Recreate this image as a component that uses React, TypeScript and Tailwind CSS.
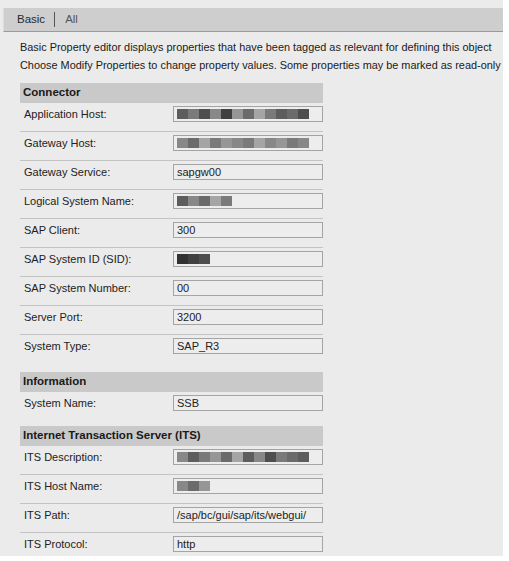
import React from "react";

type Row = { label: string; value?: string; blur?: string[] };

const connector: Row[] = [
  { label: "Application Host:", blur: ["bg-[#444]", "bg-[#666]", "bg-[#333]", "bg-[#777]", "bg-[#222]", "bg-[#888]", "bg-[#555]", "bg-[#999]", "bg-[#666]", "bg-[#444]", "bg-[#555]", "bg-[#333]"] },
  { label: "Gateway Host:", blur: ["bg-[#777]", "bg-[#555]", "bg-[#999]", "bg-[#666]", "bg-[#888]", "bg-[#777]", "bg-[#666]", "bg-[#999]", "bg-[#777]", "bg-[#888]", "bg-[#666]", "bg-[#777]"] },
  { label: "Gateway Service:", value: "sapgw00" },
  { label: "Logical System Name:", blur: ["bg-[#444]", "bg-[#777]", "bg-[#555]", "bg-[#999]", "bg-[#666]"] },
  { label: "SAP Client:", value: "300" },
  { label: "SAP System ID (SID):", blur: ["bg-[#111]", "bg-[#222]", "bg-[#333]"] },
  { label: "SAP System Number:", value: "00" },
  { label: "Server Port:", value: "3200" },
  { label: "System Type:", value: "SAP_R3" },
];

const information: Row[] = [{ label: "System Name:", value: "SSB" }];

const its: Row[] = [
  { label: "ITS Description:", blur: ["bg-[#777]", "bg-[#444]", "bg-[#666]", "bg-[#888]", "bg-[#555]", "bg-[#999]", "bg-[#444]", "bg-[#777]", "bg-[#333]", "bg-[#666]", "bg-[#555]", "bg-[#444]"] },
  { label: "ITS Host Name:", blur: ["bg-[#777]", "bg-[#555]", "bg-[#888]"] },
  { label: "ITS Path:", value: "/sap/bc/gui/sap/its/webgui/" },
  { label: "ITS Protocol:", value: "http" },
];

function Field({ row }: { row: Row }) {
  return (
    <div className="h-[16px] w-[150px] border border-[#a4a4a4] bg-[#ededed] px-[3px] flex items-center overflow-hidden">
      {row.value ? (
        <span className="text-[11px] text-[#222] leading-none">{row.value}</span>
      ) : (
        <div className="flex h-[10px] opacity-85 blur-[0.5px]">
          {row.blur?.map((c, i) => (
            <span key={i} className={`${c} w-[11px] h-full`} />
          ))}
        </div>
      )}
    </div>
  );
}

function Section({ title, rows, className }: { title: string; rows: Row[]; className?: string }) {
  return (
    <div className={`w-[303px] ${className ?? ""}`}>
      <div className="h-[20px] bg-[#c9c9c9] pl-[3px] flex items-center font-bold text-[11.5px] text-[#1a1a1a]">
        {title}
      </div>
      {rows.map((row, i) => (
        <div
          key={row.label}
          className={`flex h-[29px] pt-[3px] ${i < rows.length - 1 ? "border-b border-[#c4c4c4]" : ""}`}
        >
          <div className="w-[153px] pl-[4px] text-[11px] text-[#222] leading-[14px] pt-[1px]">{row.label}</div>
          <Field row={row} />
        </div>
      ))}
    </div>
  );
}

export default function App() {
  return (
    <div className="w-[509px] h-[561px] bg-white font-['Liberation_Sans',Arial,sans-serif]">
      <div className="w-[503px] h-[556px] bg-[#ebebeb] pt-[8px] overflow-hidden">
        <div className="ml-[3px] h-[24px] bg-[#cecece] border-b border-[#9a9a9a] border-l border-l-[#dddddd] flex items-center text-[11.5px]">
          <span className="ml-[13px] text-[#2a2a2a]">Basic</span>
          <span className="ml-[9px] w-px h-[15px] bg-[#555]" />
          <span className="ml-[10px] text-[#555]">All</span>
        </div>
        <div className="pl-[20px] pt-[6px] text-[10.9px] text-[#1a1a1a] leading-[18px] whitespace-nowrap">
          <div>Basic Property editor displays properties that have been tagged as relevant for defining this object</div>
          <div>Choose Modify Properties to change property values. Some properties may be marked as read-only</div>
        </div>
        <div className="pl-[20px] pt-[9px]">
          <Section title="Connector" rows={connector} />
          <Section title="Information" rows={information} className="mt-[8px]" />
          <Section title="Internet Transaction Server (ITS)" rows={its} className="mt-[5px]" />
        </div>
      </div>
    </div>
  );
}
